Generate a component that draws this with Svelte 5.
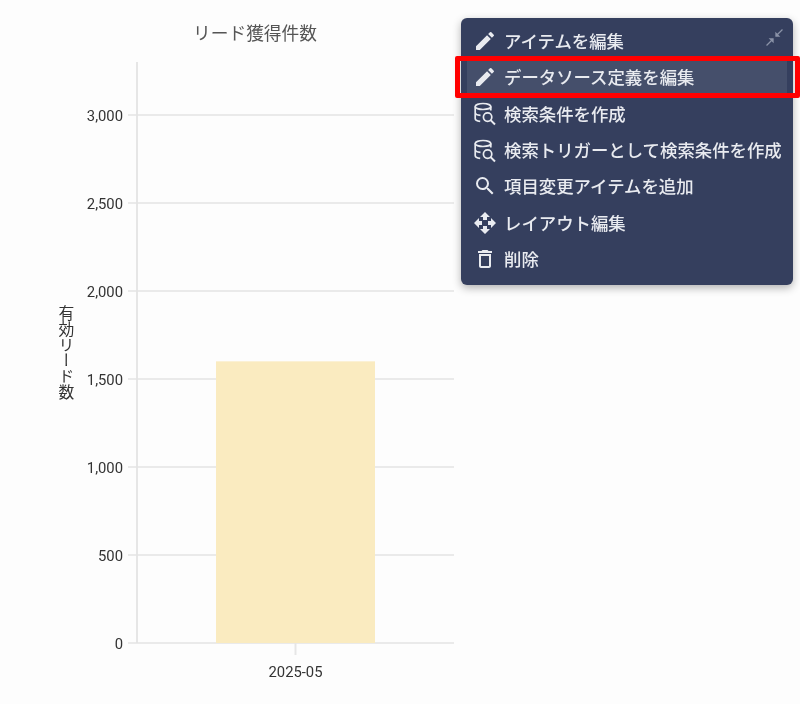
<script lang="ts">
  const ticks = [0, 500, 1000, 1500, 2000, 2500, 3000];
  const baseY = 643;
  const pxPerUnit = 0.17603;
  const y = (v: number) => baseY - v * pxPerUnit;

  const pencil = 'M3 17.25V21h3.75L17.81 9.94l-3.75-3.75L3 17.25zM20.71 7.04a1 1 0 0 0 0-1.41l-2.34-2.34a1 1 0 0 0-1.41 0l-1.83 1.83 3.75 3.75 1.83-1.83z';
  const search = 'M15.5 14h-.79l-.28-.27A6.47 6.47 0 0 0 16 9.5 6.5 6.5 0 1 0 9.5 16c1.61 0 3.09-.59 4.23-1.57l.27.28v.79l5 4.99L20.49 19l-4.99-5zm-6 0C7.01 14 5 11.99 5 9.5S7.01 5 9.5 5 14 7.01 14 9.5 11.99 14 9.5 14z';
  const move = 'M10 9h4V6h3l-5-5-5 5h3v3zm-1 1H6V7l-5 5 5 5v-3h3v-4zm14 2l-5-5v3h-3v4h3v3l5-5zm-9 3h-4v3H7l5 5 5-5h-3v-3z';
  const trash = 'M6 19c0 1.1.9 2 2 2h8c1.1 0 2-.9 2-2V7H6v12zM8 9h8v10H8V9zm7.5-5l-1-1h-5l-1 1H5v2h14V4z';

  const items = [
    { label: 'アイテムを編集', icon: pencil },
    { label: 'データソース定義を編集', icon: pencil, active: true },
    { label: '検索条件を作成', icon: 'db' },
    { label: '検索トリガーとして検索条件を作成', icon: 'db' },
    { label: '項目変更アイテムを追加', icon: search },
    { label: 'レイアウト編集', icon: move },
    { label: '削除', icon: trash }
  ];
</script>

<div class="page">
  <svg class="chart" width="470" height="704" viewBox="0 0 470 704">
    <text class="title" x="255" y="40" text-anchor="middle">リード獲得件数</text>
    <line class="axis" x1="137" y1="62" x2="137" y2="643" />
    {#each ticks as t}
      <line class="grid" x1="128" y1={y(t)} x2="454" y2={y(t)} />
      <text class="tick" x="123" y={y(t) + 6} text-anchor="end">{t.toLocaleString('en-US')}</text>
    {/each}
    <rect class="bar" x="216" y={y(1600)} width="159" height={baseY - y(1600)} />
    <line class="axis" x1="295.5" y1="643" x2="295.5" y2="655" />
    <text class="tick" x="295.5" y="677" text-anchor="middle">2025-05</text>
    <text class="ylabel" x="65.5" y="352.5" text-anchor="middle">有効リード数</text>
  </svg>

  <div class="menu">
    <svg class="collapse" viewBox="0 0 16 16" width="17" height="17">
      <path d="M15.5.5 9.6 6.4M6.4 9.6.5 15.5" fill="none" stroke="currentColor" stroke-width="1.2" />
      <path d="M8.8 2.5V7.2h4.7zM7.2 13.5V8.8H2.5z" fill="currentColor" />
    </svg>
    {#each items as item}
      <div class="item" class:active={item.active}>
        <span class="icon">
          {#if item.icon === 'db'}
            <svg viewBox="0 0 24 24" width="27" height="27" fill="none" stroke="currentColor" stroke-width="1.7">
              <ellipse cx="10" cy="5" rx="7.8" ry="3" />
              <path d="M2.2 5v12c0 1.6 2.4 2.6 5 2.9M17.8 5v4M2.2 11c0 1.6 2.4 2.7 5.3 2.9" />
              <circle cx="14.6" cy="15.6" r="4.2" />
              <path d="m17.6 18.6 4.4 4.4" stroke-width="2" />
            </svg>
          {:else}
            <svg viewBox="0 0 24 24" width="26" height="26"><path d={item.icon} fill="currentColor" /></svg>
          {/if}
        </span>
        <span class="label">{item.label}</span>
      </div>
    {/each}
  </div>

  <div class="highlight"></div>
</div>

<style>
  :global(body) {
    margin: 0;
    background: #fdfdfd;
  }

  .page {
    position: relative;
    width: 800px;
    height: 704px;
    overflow: hidden;
    font-family: Roboto, "Noto Sans CJK JP", sans-serif;
    filter: blur(0.4px);
  }

  .chart {
    display: block;
  }

  .title {
    font-size: 17.7px;
    fill: #555;
  }

  .tick {
    font-size: 14.8px;
    fill: #333;
  }

  .ylabel {
    font-size: 15.8px;
    fill: #333;
    writing-mode: vertical-rl;
  }

  .axis {
    stroke: #e6e6e6;
    stroke-width: 2;
  }

  .grid {
    stroke: #e3e3e3;
    stroke-width: 1.5;
  }

  .bar {
    fill: #faebc0;
  }

  .menu {
    position: absolute;
    left: 461px;
    top: 18px;
    width: 332px;
    height: 267px;
    box-sizing: border-box;
    padding: 5px 6px;
    display: flex;
    flex-direction: column;
    border-radius: 6px;
    background: #353f5e;
    box-shadow: 0 3px 8px rgba(0, 0, 0, 0.3);
    color: #e9ebf0;
  }

  .collapse {
    position: absolute;
    top: 11px;
    right: 10px;
    color: #8b93a8;
  }

  .item {
    display: flex;
    align-items: center;
    height: 36.3px;
    flex-shrink: 0;
    padding-left: 6px;
    box-sizing: border-box;
  }

  .item.active {
    background: #454f6b;
  }

  .icon {
    display: flex;
    justify-content: center;
    width: 24px;
    margin-right: 7px;
    flex-shrink: 0;
  }

  .label {
    font-size: 17.4px;
    font-weight: 500;
    white-space: nowrap;
    position: relative;
    top: -0.5px;
  }

  .highlight {
    position: absolute;
    left: 455px;
    top: 56px;
    width: 345px;
    height: 42px;
    box-sizing: border-box;
    border: 5px solid #f00;
    border-radius: 2px;
  }
</style>
